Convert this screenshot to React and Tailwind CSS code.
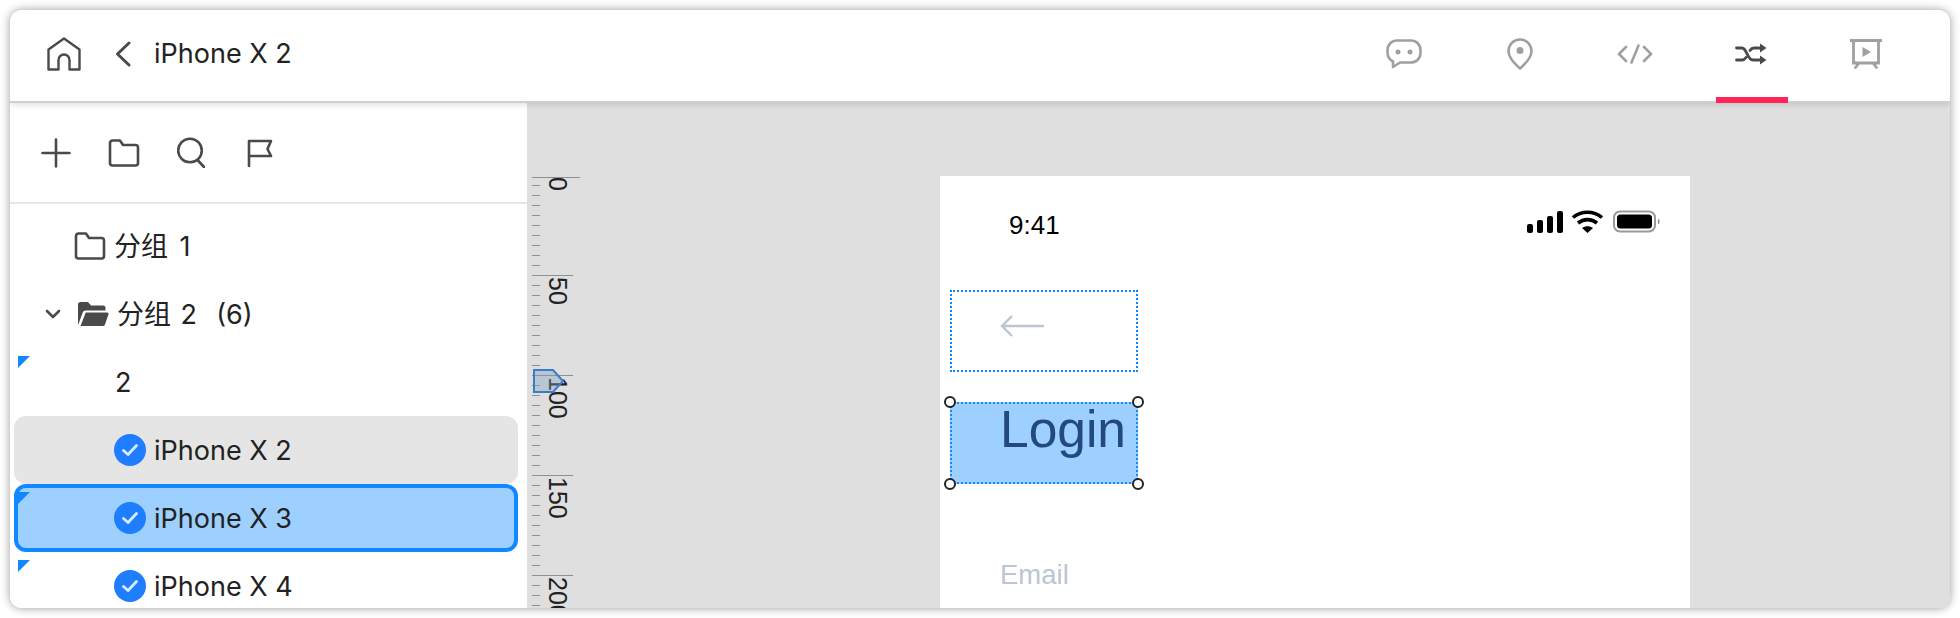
const uiFont = { fontFamily: "Inter, 'Noto Sans CJK SC', sans-serif" };

const rulerMarks = [0, 50, 100, 150, 200];
const rulerTicks = Array.from({ length: 43 }, (_, i) => 82 + i * 10).filter((y) => (y - 72) % 100 !== 0);

function HomeIcon() {
  return (
    <svg width="36" height="36" viewBox="0 0 36 36" fill="none" stroke="#4a4a4a" strokeWidth="2.4" strokeLinejoin="round">
      <path d="M2.500 33.500V13.500L18 2.500L33.500 13.500V33.500H23.500V24A5.500 5.500 0 0 0 12.500 24V33.500Z" />
    </svg>
  );
}

function ChevronLeft() {
  return (
    <svg width="18" height="26" viewBox="0 0 18 26" fill="none" stroke="#4a4a4a" strokeWidth="3" strokeLinecap="round" strokeLinejoin="round">
      <path d="M15 2L3.500 13L15 24" />
    </svg>
  );
}

function PlusIcon() {
  return (
    <svg width="30" height="30" viewBox="0 0 30 30" fill="none" stroke="#4a4a4a" strokeWidth="2.600" strokeLinecap="round">
      <path d="M15 1.500V28.500M1.500 15H28.500" />
    </svg>
  );
}

function FolderIcon() {
  return (
    <svg width="32" height="28" viewBox="0 0 32 28" fill="none" stroke="#4a4a4a" strokeWidth="2.600" strokeLinejoin="round">
      <path d="M2 4A2.500 2.500 0 0 1 4.500 1.500H12L15 6H27.500A2.500 2.500 0 0 1 30 8.500V24A2.500 2.500 0 0 1 27.500 26.500H4.500A2.500 2.500 0 0 1 2 24Z" />
    </svg>
  );
}

function OpenFolderIcon() {
  return (
    <svg width="32" height="26" viewBox="0 0 32 26">
      <path fill="#4a4a4a" d="M1 3.500A2.500 2.500 0 0 1 3.500 1H11L14 4.500H26A2.500 2.500 0 0 1 28.500 7V9.500H8.500A3 3 0 0 0 5.700 11.500L1.300 23.500A2 2 0 0 1 1 22.500Z" />
      <path fill="#4a4a4a" d="M8.700 11.500H30A1.500 1.500 0 0 1 31.400 13.500L28 23.500A2.500 2.500 0 0 1 25.600 25H3.500Z" />
    </svg>
  );
}

function SearchIcon() {
  return (
    <svg width="28" height="31" viewBox="0 0 28 31" fill="none" stroke="#4a4a4a" strokeWidth="2.600" strokeLinecap="round">
      <circle cx="13" cy="13.500" r="11.800" />
      <path d="M20.500 23L27 30" />
    </svg>
  );
}

function FlagIcon() {
  return (
    <svg width="26" height="28" viewBox="0 0 26 28" fill="none" stroke="#4a4a4a" strokeWidth="2.600" strokeLinecap="round" strokeLinejoin="round">
      <path d="M2 27V2H24L20.500 10L24 17H2" />
    </svg>
  );
}

function SmallChevronDown() {
  return (
    <svg width="16" height="10" viewBox="0 0 16 10" fill="none" stroke="#4a4a4a" strokeWidth="2.600" strokeLinecap="round" strokeLinejoin="round">
      <path d="M2 2L8 8L14 2" />
    </svg>
  );
}

function ChatIcon() {
  return (
    <svg width="36" height="30" viewBox="0 0 36 30" fill="none">
      <path stroke="#a0a0a0" strokeWidth="2.600" strokeLinejoin="round" d="M11 1.500H25A9.500 9.500 0 0 1 34.500 11V14A9.500 9.500 0 0 1 25 23.500H14L7 28V22.500A10 10 0 0 1 1.500 14V11A9.500 9.500 0 0 1 11 1.500Z" />
      <circle cx="12" cy="13" r="2.500" fill="#a0a0a0" />
      <circle cx="24" cy="13" r="2.500" fill="#a0a0a0" />
    </svg>
  );
}

function PinIcon() {
  return (
    <svg width="26" height="32" viewBox="0 0 26 32" fill="none">
      <path stroke="#a0a0a0" strokeWidth="2.600" strokeLinejoin="round" d="M13 30.500C6 24.500 1.500 19 1.500 13A11.500 11.500 0 0 1 24.500 13C24.500 19 20 24.500 13 30.500Z" />
      <circle cx="13" cy="12.500" r="3.500" fill="#a0a0a0" />
    </svg>
  );
}

function CodeIcon() {
  return (
    <svg width="36" height="20" viewBox="0 0 36 20" fill="none" stroke="#a0a0a0" strokeWidth="2.600" strokeLinecap="round" strokeLinejoin="round">
      <path d="M9 3L2 10L9 17M27 3L34 10L27 17M21.500 1.500L14.500 18.500" />
    </svg>
  );
}

function ShuffleIcon() {
  return (
    <svg width="32" height="22" viewBox="0 0 32 22" fill="none">
      <path stroke="#4a4a4a" strokeWidth="2.800" strokeLinecap="round" d="M1.500 5H7C12 5 12 17 18 17H27M1.500 17H7C9 17 10 16 11 14.500M15 7.500C16 6 17 5 19 5H27" />
      <path fill="#4a4a4a" d="M25 0.500L31.500 5L25 9.500ZM25 12.500L31.500 17L25 21.500Z" />
    </svg>
  );
}

function PresentIcon() {
  return (
    <svg width="32" height="30" viewBox="0 0 32 30" fill="none">
      <path stroke="#a0a0a0" strokeWidth="2.800" strokeLinecap="round" d="M0.500 1.500H31.500M3.500 2V24H28.500V2M9 24L5.500 28.500M23 24L26.500 28.500" />
      <path fill="#a0a0a0" d="M12.500 8V18L21 13Z" />
    </svg>
  );
}

function CheckBadge() {
  return (
    <div className="flex h-8 w-8 items-center justify-center rounded-full bg-[#1f7dff]">
      <svg width="18" height="16" viewBox="0 0 18 16" fill="none" stroke="#dbeaff" strokeWidth="2.800" strokeLinecap="round" strokeLinejoin="round">
        <path d="M2.500 8.500L7 12.500L15.500 3.500" />
      </svg>
    </div>
  );
}

function CornerMark({ className }) {
  return <span className={`absolute h-3 w-3 bg-[#1188ff] [clip-path:polygon(0_0,100%_0,0_100%)] ${className}`}></span>;
}

function Ruler() {
  return (
    <div className="absolute top-0 bottom-0 left-0 w-[60px]">
      {rulerTicks.map((y) => (
        <span key={y} className="absolute left-[5px] h-px w-[8px] bg-[#8f8f8f]" style={{ top: y }}></span>
      ))}
      {rulerMarks.map((mark, i) => (
        <span key={mark} className={`absolute left-[5px] h-px bg-[#8f8f8f] ${i === 0 ? "w-[48px]" : "w-[41px]"}`} style={{ top: (i === 0 ? 74 : 72) + i * 100 }}></span>
      ))}
      {rulerMarks.map((mark, i) => (
        <span
          key={mark}
          className="absolute left-[18px] text-[25px] leading-[26px] text-[#222] [writing-mode:vertical-rl]"
          style={{ top: 74 + i * 100, fontFamily: "'Liberation Sans', sans-serif" }}
        >
          {mark}
        </span>
      ))}
      <svg className="absolute top-[266px] left-[6px]" width="32" height="24" viewBox="0 0 32 24">
        <path d="M1 1H20L30 12L20 23H1Z" fill="#7f9fc4" fillOpacity="0.4" stroke="#3a7ccb" strokeWidth="2" />
      </svg>
    </div>
  );
}

function Handle({ className }) {
  return <span className={`absolute h-3 w-3 rounded-full border-2 border-[#222] bg-white ${className}`}></span>;
}

function Artboard() {
  return (
    <div className="absolute top-[73px] left-[413px] h-[433px] w-[750px] bg-white" style={{ fontFamily: "'Liberation Sans', sans-serif" }}>
      <span className="absolute top-[35px] left-[69px] text-[26px] leading-[28px] text-black">9:41</span>

      <svg className="absolute top-[34px] left-[586px]" width="134" height="24" viewBox="0 0 134 24">
        <rect x="1" y="14" width="6" height="9" rx="2" fill="#000" />
        <rect x="11" y="10" width="6" height="13" rx="2" fill="#000" />
        <rect x="21" y="6" width="6" height="17" rx="2" fill="#000" />
        <rect x="31" y="1" width="6" height="22" rx="2" fill="#000" />
        <path d="M47 7.500C55 0.500 68 0.500 76 7.500" fill="none" stroke="#000" strokeWidth="3.600" />
        <path d="M52 13C57.500 8.500 65.500 8.500 71 13" fill="none" stroke="#000" strokeWidth="3.600" />
        <path d="M56 18L61.500 23L67 18C63.500 15.500 59.500 15.500 56 18Z" fill="#000" />
        <rect x="88" y="1.500" width="41" height="20" rx="6" fill="none" stroke="#9a9a9a" strokeWidth="2" />
        <rect x="91" y="4.500" width="35" height="14" rx="3.500" fill="#000" />
        <path d="M132 8.500C134 9.500 134 13.500 132 14.500Z" fill="#8a8a8a" />
      </svg>

      <div className="absolute top-[114px] left-[10px] h-[82px] w-[188px] border-2 border-dotted border-[#1188ff]">
        <svg className="absolute top-[22px] left-[47px]" width="46" height="24" viewBox="0 0 46 24" fill="none" stroke="#bcc5d3" strokeWidth="2.400">
          <path d="M45 12H3M13 2L3 12L13 22" />
        </svg>
      </div>

      <div className="absolute top-[226px] left-[10px] h-[82px] w-[188px] border-2 border-dotted border-[#1188ff] bg-[#9dcfff]">
        <span className="absolute top-[-4px] left-[48px] text-[51.5px] leading-[58px] text-[#234a80]">Login</span>
      </div>
      <Handle className="top-[220px] left-[4px]" />
      <Handle className="top-[220px] left-[192px]" />
      <Handle className="top-[302px] left-[4px]" />
      <Handle className="top-[302px] left-[192px]" />

      <span className="absolute top-[383px] left-[60px] text-[27.5px] leading-[32px] text-[#bdc5d3]">Email</span>
    </div>
  );
}

export default function App() {
  return (
    <div className="h-[618px] w-[1960px] bg-white p-[10px]" style={uiFont}>
      <div className="flex h-full w-full flex-col overflow-hidden rounded-xl bg-white text-[27px] text-[#222] shadow-[0_0_10px_rgba(0,0,0,0.4)]">
        <header className="relative z-10 flex h-[93px] shrink-0 items-center border-b-2 border-[#cfcfcf] bg-white pb-[3px] shadow-[0_2px_6px_rgba(0,0,0,0.12)]">
          <div className="ml-[36px] flex items-center">
            <HomeIcon />
            <div className="ml-[32px]">
              <ChevronLeft />
            </div>
            <span className="ml-[22px]">iPhone X 2</span>
          </div>
          <nav className="ml-auto mr-[26px] flex items-center self-stretch">
            <div className="flex w-[115.5px] justify-center"><ChatIcon /></div>
            <div className="flex w-[115.5px] justify-center"><PinIcon /></div>
            <div className="flex w-[115.5px] justify-center"><CodeIcon /></div>
            <div className="relative flex w-[115.5px] justify-center self-stretch">
              <div className="flex items-center"><ShuffleIcon /></div>
              <span className="absolute right-[20.5px] -bottom-[5px] left-[22.5px] h-[6px] bg-[#ff2357]"></span>
            </div>
            <div className="flex w-[115.5px] justify-center"><PresentIcon /></div>
          </nav>
        </header>

        <div className="flex min-h-0 flex-1">
          <aside className="flex w-[517px] shrink-0 flex-col bg-white">
            <div className="flex h-[101px] shrink-0 items-center gap-[37px] border-b-2 border-[#e6e6e6] pl-[31px]">
              <PlusIcon />
              <FolderIcon />
              <SearchIcon />
              <div className="ml-[5px]">
                <FlagIcon />
              </div>
            </div>
            <div className="flex flex-col pt-[8px] pr-[9px] pl-[4px]">
              <div className="flex h-[68px] items-center gap-[8px] pl-[60px]">
                <FolderIcon />
                <span className="pt-[2px] [word-spacing:4px]">分组 1</span>
              </div>
              <div className="flex h-[68px] items-center pl-[31px]">
                <SmallChevronDown />
                <div className="ml-[16px]">
                  <OpenFolderIcon />
                </div>
                <span className="ml-[8px] whitespace-pre pt-[2px] [word-spacing:2px]">分组 2  (6)</span>
              </div>
              <div className="relative flex h-[68px] items-center pl-[101px]">
                <CornerMark className="top-2 left-1" />
                <span className="pt-[2px]">2</span>
              </div>
              <div className="flex h-[68px] items-center gap-2 rounded-xl bg-[#e5e5e5] pl-[100px]">
                <CheckBadge />
                <span className="pt-[2px]">iPhone X 2</span>
              </div>
              <div className="relative flex h-[68px] items-center gap-2 rounded-xl border-4 border-[#1188ff] bg-[#9dcfff] pl-[96px]">
                <CornerMark className="top-1 left-0" />
                <CheckBadge />
                <span className="pt-[2px]">iPhone X 3</span>
              </div>
              <div className="relative flex h-[68px] items-center gap-2 pl-[100px]">
                <CornerMark className="top-2 left-1" />
                <CheckBadge />
                <span className="pt-[2px]">iPhone X 4</span>
              </div>
            </div>
          </aside>

          <main className="relative flex-1 bg-[#dfdfdf]">
            <Ruler />
            <Artboard />
          </main>
        </div>
      </div>
    </div>
  );
}
